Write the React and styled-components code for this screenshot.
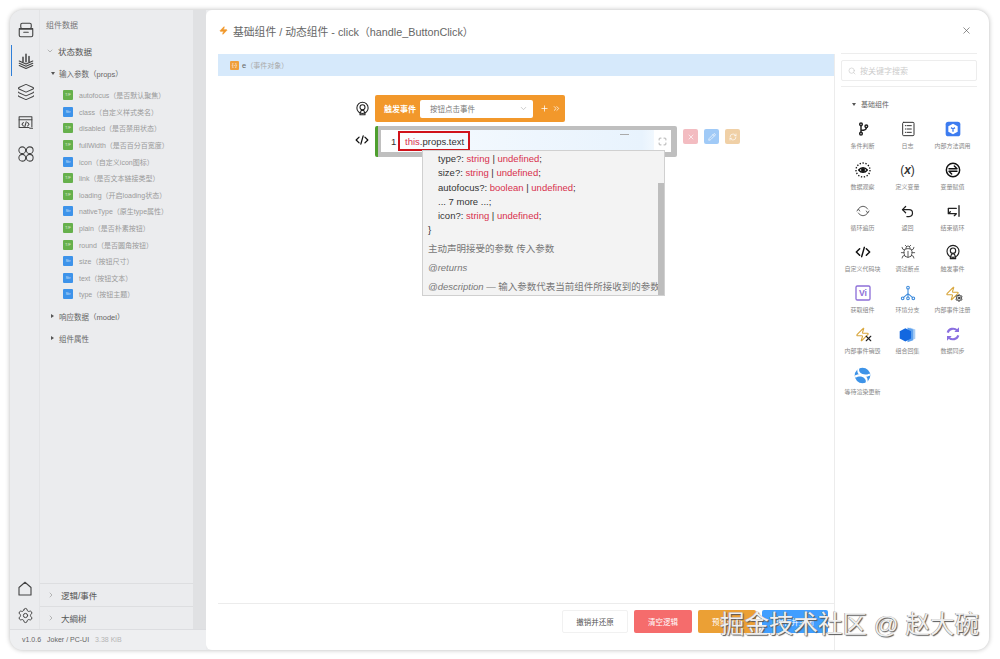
import React from "react";
import styled, { createGlobalStyle } from "styled-components";
import { Layers, Settings, X, Search, ChevronRight, ChevronDown, Plus, ChevronsRight, Bug, Undo2, RefreshCw, Zap, Pencil, Maximize } from "lucide-react";

const FONT = `"Liberation Sans", "Noto Sans CJK SC", sans-serif`;

const GlobalStyle = createGlobalStyle`
  html, body { margin: 0; padding: 0; background: #fff; }
  body { font-family: ${FONT}; width: 1000px; height: 659px; overflow: hidden; }
  * { box-sizing: border-box; }
`;

const params = [
  ["T/F", "autofocus", "（是否默认聚焦）"],
  ["Str", "class", "（自定义样式类名）"],
  ["T/F", "disabled", "（是否禁用状态）"],
  ["T/F", "fullWidth", "（是否百分百宽度）"],
  ["Str", "icon", "（自定义icon图标）"],
  ["T/F", "link", "（是否文本链接类型）"],
  ["T/F", "loading", "（开启loading状态）"],
  ["Str", "nativeType", "（原生type属性）"],
  ["T/F", "plain", "（是否朴素按钮）"],
  ["T/F", "round", "（是否圆角按钮）"],
  ["Str", "size", "（按钮尺寸）"],
  ["Str", "text", "（按钮文本）"],
  ["Str", "type", "（按钮主题）"],
];

const Svg = ({ children, size = 16, color = "#222", sw = 1.5 }) => (
  <svg width={size} height={size} viewBox="0 0 24 24" fill="none" stroke={color} strokeWidth={sw} strokeLinecap="round" strokeLinejoin="round">
    {children}
  </svg>
);

const TrayIcon = () => (
  <Svg size={18} color="#444">
    <rect x="5" y="3" width="14" height="7" rx="2" />
    <path d="M3 11h18v8a2 2 0 0 1-2 2H5a2 2 0 0 1-2-2z" />
    <path d="M3 10h18M9 15h6" />
  </Svg>
);

const DataIcon = () => (
  <Svg size={18} color="#444">
    <path d="M3 15l9 4 9-4M3 18l9 4 9-4M3 12l9 4 9-4" />
    <path d="M12 3v10M8 7v6M16 6v7" strokeWidth="2" />
  </Svg>
);

const CodeBoxIcon = () => (
  <Svg size={17} color="#444">
    <path d="M21 18V4H3v15h14" />
    <path d="M3 8h18M9 12l-2 2.5 2 2.5M15 12l2 2.5-2 2.5M13 11l-2 7M18 20h4" />
  </Svg>
);

const HomeIcon = () => (
  <Svg size={18} color="#444">
    <path d="M4 10l8-7 8 7v10H4z" />
  </Svg>
);

const LoopsIcon = () => (
  <Svg size={18} color="#444" sw={1.4}>
    <circle cx="7" cy="7" r="4.5" />
    <circle cx="17" cy="7" r="4.5" />
    <circle cx="7" cy="17" r="4.5" />
    <circle cx="17" cy="17" r="4.5" />
  </Svg>
);

const TriggerIcon = ({ size = 16 }) => (
  <Svg size={size} color="#222" sw={1.7}>
    <circle cx="12" cy="11" r="9" />
    <circle cx="12" cy="10" r="4" />
    <path d="M8 20l2-5h4l2 5v2H8z" />
  </Svg>
);

const CodeIcon = ({ size = 16 }) => (
  <Svg size={size} color="#111" sw={2.2}>
    <path d="M7 7l-5 5 5 5M17 7l5 5-5 5M14 5l-4 14" />
  </Svg>
);

const BranchIcon = () => (
  <Svg color="#222" sw={2.2}>
    <circle cx="9" cy="5" r="2" />
    <circle cx="9" cy="19" r="2" />
    <circle cx="17" cy="8" r="2" />
    <path d="M9 7v10M17 10c0 3-4 4-8 4" />
  </Svg>
);

const LogIcon = () => (
  <Svg color="#333">
    <rect x="4" y="2" width="17" height="20" rx="1.5" />
    <path d="M8 7h1M8 12h1M8 17h1M11 7h6M11 12h6M11 17h6" />
  </Svg>
);

const MethodIcon = () => (
  <svg width="16" height="16" viewBox="0 0 24 24">
    <rect x="1" y="1" width="22" height="22" rx="4" fill="#3d7cf0" />
    <path d="M12 4l7 4v8l-7 4-7-4V8z" fill="#fff" />
    <path d="M9 10l3 2 3-2M12 12v4" stroke="#3d7cf0" strokeWidth="2" fill="none" />
  </svg>
);

const WatchIcon = () => (
  <svg width="16" height="16" viewBox="0 0 24 24" fill="none" stroke="#111" strokeWidth="2">
    <circle cx="12" cy="12" r="10.5" strokeDasharray="2 2.4" />
    <path d="M5.5 12c3.500-4.500 9.500-4.500 13 0-3.500 4.500-9.500 4.500-13 0z" />
    <circle cx="12" cy="12" r="2" fill="#111" />
  </svg>
);

const AssignIcon = () => (
  <Svg color="#111" sw={2.2}>
    <circle cx="12" cy="12" r="10" />
    <path d="M6 10h12l-4-4M18 14H6l4 4" />
  </Svg>
);

const LoopIcon = () => (
  <Svg color="#555" sw={1.4}>
    <path d="M5 9a8 8 0 0 1 14 0M19 15a8 8 0 0 1-14 0" />
    <path d="M3 12l2-3 2 3M21 12l-2 3-2-3" />
  </Svg>
);

const BreakIcon = () => (
  <Svg color="#222" sw={2}>
    <path d="M21 4v16M17 8H5v8h12M5 16l3-3M17 16l-3 3" />
  </Svg>
);

const ViIcon = () => (
  <svg width="16" height="16" viewBox="0 0 24 24">
    <rect x="1.5" y="1.5" width="21" height="21" rx="2" fill="none" stroke="#8d6fd8" strokeWidth="2" />
    <text x="12" y="17" textAnchor="middle" fontSize="13" fontWeight="700" fill="#8d6fd8" fontFamily="Liberation Sans">Vi</text>
  </svg>
);

const TreeIcon = () => (
  <Svg color="#3d8bdc" sw={1.6}>
    <circle cx="12" cy="4" r="2" />
    <circle cx="4" cy="20" r="2" />
    <circle cx="12" cy="20" r="2" />
    <circle cx="20" cy="20" r="2" />
    <path d="M12 6v12M12 13l-7 6M12 13l7 6" />
  </Svg>
);

const ZapBadge = styled.span`
  position: relative;
  display: inline-flex;
  color: #d8a53a;
  & > b {
    position: absolute;
    right: -3px;
    bottom: -1px;
    display: flex;
    color: #222;
  }
`;

const ZapSetIcon = () => (
  <ZapBadge>
    <Zap size={15} strokeWidth={1.8} />
    <b><Settings size={8} strokeWidth={3} /></b>
  </ZapBadge>
);

const ZapCloseIcon = () => (
  <ZapBadge>
    <Zap size={15} strokeWidth={1.8} />
    <b><X size={9} strokeWidth={3} /></b>
  </ZapBadge>
);

const ComboIcon = () => (
  <svg width="17" height="17" viewBox="0 0 24 24">
    <path d="M15 2l8 3v13l-8 3z" fill="#a9cdf5" />
    <path d="M12 2l8 3v15l-8 3z" fill="#5fa2ee" />
    <path d="M9 3l8 4.500v10L9 22l-8-4.500v-10z" fill="#1368e0" />
  </svg>
);

const SyncIcon = () => (
  <svg width="16" height="16" viewBox="0 0 24 24" fill="none" stroke="#8a6fe0" strokeWidth="3.2">
    <path d="M4 10a8.500 8.500 0 0 1 14-3.500" />
    <path d="M20 14a8.500 8.500 0 0 1-14 3.500" />
    <path d="M21 2v7h-7M3 22v-7h7" fill="#8a6fe0" stroke="none" />
  </svg>
);

const WaitIcon = () => (
  <svg width="17" height="17" viewBox="0 0 24 24">
    <circle cx="12" cy="12" r="11" fill="#3d93e8" />
    <path d="M8 1c-2 4 0 7 4 9 3 1 6 1 10-1l1 3c-6 3-11 2-14 0C5 10 4 6 5 2z" fill="#fff" />
    <path d="M16 23c2-4 0-7-4-9-3-1-6-1-10 1l-1-3c6-3 11-2 14 0 4 2 5 6 4 10z" fill="#fff" />
  </svg>
);

const VarText = styled.span`
  font-size: 12px;
  color: #333;
  line-height: 16px;
  & > i {
    font-weight: 700;
  }
`;

const palette = [
  [<BranchIcon />, "条件判断"],
  [<LogIcon />, "日志"],
  [<MethodIcon />, "内部方法调用"],
  [<WatchIcon />, "数据观察"],
  [<VarText>(<i>x</i>)</VarText>, "定义变量"],
  [<AssignIcon />, "变量赋值"],
  [<LoopIcon />, "循环遍历"],
  [<Undo2 size={15} color="#222" strokeWidth={2} />, "返回"],
  [<BreakIcon />, "结束循环"],
  [<CodeIcon />, "自定义代码块"],
  [<Bug size={16} color="#444" strokeWidth={1.3} />, "调试断点"],
  [<TriggerIcon />, "触发事件"],
  [<ViIcon />, "获取组件"],
  [<TreeIcon />, "环境分支"],
  [<ZapSetIcon />, "内部事件注册"],
  [<ZapCloseIcon />, "内部事件销毁"],
  [<ComboIcon />, "组合回集"],
  [<SyncIcon />, "数据同步"],
  [<WaitIcon />, "等待渲染更新"],
];

export default function App() {
  return (
    <>
      <GlobalStyle />
      <Page>
        <Win>
          <LeftCol>
            <LeftMain>
              <Rail>
                <RailItem><TrayIcon /></RailItem>
                <RailItem $active><DataIcon /></RailItem>
                <RailItem><Layers size={18} color="#444" strokeWidth={1.4} /></RailItem>
                <RailItem><CodeBoxIcon /></RailItem>
                <RailItem><LoopsIcon /></RailItem>
                <RailBottom>
                  <RailSmall><HomeIcon /></RailSmall>
                  <RailSmall><Settings size={17} color="#444" strokeWidth={1.4} /></RailSmall>
                </RailBottom>
              </Rail>
              <Panel>
                <PanelTitle>组件数据</PanelTitle>
                <GroupHead><ChevronDown size={8} color="#999" />状态数据</GroupHead>
                <SubHead><Caret />输入参数（props）</SubHead>
                <ParamList>
                  {params.map(([type, name, note]) => (
                    <ParamRow key={name}>
                      <TypeTag $str={type === "Str"}>{type}</TypeTag>
                      {name}{note}
                    </ParamRow>
                  ))}
                </ParamList>
                <SubHead $gap="7px"><Caret $right />响应数据（model）</SubHead>
                <SubHead $gap="9px"><Caret $right />组件属性</SubHead>
                <Accordions>
                  <AccordionRow><ChevronRight size={8} color="#999" />逻辑/事件</AccordionRow>
                  <AccordionRow><ChevronRight size={8} color="#999" />大綱树</AccordionRow>
                </Accordions>
              </Panel>
              <PanelShade />
            </LeftMain>
            <StatusBar>
              <span>v1.0.6</span>
              <span>Joker / PC-UI</span>
              <Muted>3.38 KiB</Muted>
            </StatusBar>
          </LeftCol>
          <Modal>
            <ModalHead>
              <Zap size={9} color="#f0982b" fill="#f0982b" />
              <ModalTitle>基础组件 / 动态组件 - click（handle_ButtonClick）</ModalTitle>
              <CloseBtn><X size={11} strokeWidth={1.4} /></CloseBtn>
            </ModalHead>
            <ModalBody>
              <Workspace>
                <ParamBar>
                  <ParamBadge>{"{-}"}</ParamBadge>
                  <span>e</span>
                  <ParamNote>（事件对象）</ParamNote>
                </ParamBar>
                <Canvas>
                  <BlockRow>
                    <BlockIcon><TriggerIcon size={15} /></BlockIcon>
                    <EventBlock>
                      <EventLabel>触发事件</EventLabel>
                      <EventSelect>
                        按钮点击事件
                        <ChevronDown size={9} color="#bbb" />
                      </EventSelect>
                      <Plus size={9} color="#fff" />
                      <ChevronsRight size={9} color="#fff" />
                    </EventBlock>
                  </BlockRow>
                  <BlockRow>
                    <BlockIcon><CodeIcon size={14} /></BlockIcon>
                    <EditorBlock>
                      <EditorInner>
                        <LineNo>1</LineNo>
                        <CodeBox><Kw>this</Kw>.props.text</CodeBox>
                        <MiniDash />
                        <ExpandBtn><Maximize size={9} color="#999" /></ExpandBtn>
                      </EditorInner>
                      <Hover>
                        <HoverLine $indent>type?: <Kw>string</Kw> | <Kw>undefined</Kw>;</HoverLine>
                        <HoverLine $indent>size?: <Kw>string</Kw> | <Kw>undefined</Kw>;</HoverLine>
                        <HoverLine $indent>autofocus?: <Kw>boolean</Kw> | <Kw>undefined</Kw>;</HoverLine>
                        <HoverLine $indent>... 7 more ...;</HoverLine>
                        <HoverLine $indent>icon?: <Kw>string</Kw> | <Kw>undefined</Kw>;</HoverLine>
                        <HoverLine>{"}"}</HoverLine>
                        <HoverDoc>主动声明接受的参数 传入参数</HoverDoc>
                        <HoverDoc><em>@returns</em></HoverDoc>
                        <HoverDoc><em>@description</em> — 输入参数代表当前组件所接收到的参数</HoverDoc>
                        <ScrollThumb />
                      </Hover>
                    </EditorBlock>
                    <Actions>
                      <ActionBtn $bg="#f3bcc1"><X size={8} color="#fff" /></ActionBtn>
                      <ActionBtn $bg="#a0caf7"><Pencil size={8} color="#fff" /></ActionBtn>
                      <ActionBtn $bg="#f0d0a6"><RefreshCw size={8} color="#fff" /></ActionBtn>
                    </Actions>
                  </BlockRow>
                </Canvas>
                <FootBar>
                  <FootBtn $bg="#fff" $color="#555" $w="66px" $line>撤销并还原</FootBtn>
                  <FootBtn $bg="#f56c6c" $w="58px">清空逻辑</FootBtn>
                  <FootBtn $bg="#eba035" $w="58px">预览调试</FootBtn>
                  <FootBtn $bg="#409eff" $w="66px">保存并关闭</FootBtn>
                </FootBar>
              </Workspace>
              <Palette>
                <SearchBox><Search size={8} color="#ccc" />按关键字搜索</SearchBox>
                <PaletteHead><Caret />基础组件</PaletteHead>
                <PaletteGrid>
                  {palette.map(([icon, label]) => (
                    <PaletteItem key={label}>
                      <PaletteIcon>{icon}</PaletteIcon>
                      <PaletteLabel>{label}</PaletteLabel>
                    </PaletteItem>
                  ))}
                </PaletteGrid>
              </Palette>
            </ModalBody>
          </Modal>
        </Win>
        <Watermark>掘金技术社区 @ 赵大碗</Watermark>
      </Page>
    </>
  );
}

const Page = styled.div`
  position: relative;
  width: 1000px;
  height: 659px;
  padding: 10px 11px 9px 10px;
`;

const Win = styled.div`
  display: flex;
  height: 640px;
  border-radius: 13px;
  overflow: hidden;
  background: #ebecee;
  box-shadow: 0 0 5px rgba(0, 0, 0, 0.28);
`;

const LeftCol = styled.div`
  width: 196px;
  flex: none;
  display: flex;
  flex-direction: column;
`;

const LeftMain = styled.div`
  flex: 1;
  display: flex;
  min-height: 0;
`;

const Rail = styled.div`
  width: 30px;
  flex: none;
  display: flex;
  flex-direction: column;
  padding: 4px 0 0 1px;
  background: #ebecee;
  border-right: 1px solid #e3e4e6;
`;

const RailItem = styled.div`
  height: 31px;
  display: flex;
  align-items: center;
  justify-content: center;
  border-left: 1.5px solid ${(p) => (p.$active ? "#2f7fd8" : "transparent")};
`;

const RailBottom = styled.div`
  margin-top: auto;
  padding-bottom: 1px;
`;

const RailSmall = styled.div`
  height: 26px;
  display: flex;
  align-items: center;
  justify-content: center;
`;

const Panel = styled.div`
  width: 153px;
  flex: none;
  display: flex;
  flex-direction: column;
  padding-left: 6px;
`;

const PanelShade = styled.div`
  flex: 1;
  background: #e0e1e3;
`;

const PanelTitle = styled.div`
  height: 31px;
  padding-top: 10px;
  font-size: 8px;
  line-height: 11px;
  color: #777;
`;

const GroupHead = styled.div`
  height: 20px;
  display: flex;
  align-items: center;
  gap: 4px;
  font-size: 8.5px;
  color: #555;
`;

const SubHead = styled.div`
  display: flex;
  align-items: center;
  height: 13px;
  margin: ${(p) => p.$gap || "6px"} 0 0 5px;
  font-size: 7.5px;
  color: #666;
  gap: 4px;
`;

const Caret = styled.i`
  width: 0;
  height: 0;
  flex: none;
  ${(p) =>
    p.$right
      ? "border-left: 3px solid #555; border-top: 2.5px solid transparent; border-bottom: 2.5px solid transparent; margin-right: 1px;"
      : "border-top: 3px solid #555; border-left: 2.5px solid transparent; border-right: 2.5px solid transparent;"}
`;

const ParamList = styled.div`
  margin-top: 7px;
  padding-left: 17px;
`;

const ParamRow = styled.div`
  height: 16.6px;
  display: flex;
  align-items: center;
  font-size: 7px;
  color: #9a9a9a;
  white-space: nowrap;
`;

const TypeTag = styled.span`
  width: 10px;
  height: 10px;
  margin-right: 6px;
  flex: none;
  background: ${(p) => (p.$str ? "#3d93ea" : "#66b04c")};
  color: rgba(255, 255, 255, 0.75);
  font-size: 4px;
  line-height: 10px;
  text-align: center;
  border-radius: 1px;
`;

const Accordions = styled.div`
  margin-top: auto;
`;

const AccordionRow = styled.div`
  height: 23px;
  display: flex;
  align-items: center;
  gap: 6px;
  margin-left: -6px;
  padding-left: 7px;
  border-top: 1px solid #dddee0;
  font-size: 8.5px;
  color: #555;
`;

const StatusBar = styled.div`
  height: 21px;
  flex: none;
  display: flex;
  align-items: center;
  gap: 6px;
  padding: 0 0 2px 12px;
  border-top: 1px solid #dcdde0;
  background: #eeeff1;
  font-size: 7px;
  color: #666;
`;

const Muted = styled.span`
  color: #b5b5b5;
`;

const Modal = styled.div`
  flex: 1;
  min-width: 0;
  display: flex;
  flex-direction: column;
  background: #fff;
  border-radius: 6px 0 0 6px;
`;

const ModalHead = styled.div`
  height: 44px;
  flex: none;
  display: flex;
  align-items: center;
  padding: 0 17px 3px 13px;
`;

const ModalTitle = styled.div`
  margin-left: 5px;
  font-size: 10.8px;
  color: #666;
`;

const CloseBtn = styled.div`
  margin-left: auto;
  display: flex;
  color: #555;
`;

const ModalBody = styled.div`
  flex: 1;
  min-height: 0;
  display: flex;
  padding-left: 12px;
`;

const Workspace = styled.div`
  width: 617px;
  flex: none;
  display: flex;
  flex-direction: column;
  border-right: 1px solid #ececec;
`;

const ParamBar = styled.div`
  height: 22px;
  flex: none;
  display: flex;
  align-items: center;
  padding-left: 12px;
  background: #d6e9fb;
  font-size: 7.5px;
  color: #666;
`;

const ParamBadge = styled.span`
  width: 9px;
  height: 9px;
  margin-right: 3px;
  background: #ef9f3c;
  border-radius: 1px;
  color: #fff;
  font-size: 5px;
  line-height: 9px;
  text-align: center;
`;

const ParamNote = styled.span`
  color: #aaa;
  font-size: 7px;
`;

const Canvas = styled.div`
  flex: 1;
  display: flex;
  flex-direction: column;
  gap: 4px;
  padding: 19px 0 0 137px;
`;

const BlockRow = styled.div`
  display: flex;
  align-items: flex-start;
`;

const BlockIcon = styled.div`
  width: 20px;
  height: 27px;
  display: flex;
  align-items: center;
  flex: none;
`;

const EventBlock = styled.div`
  width: 190px;
  height: 27px;
  display: flex;
  align-items: center;
  gap: 3px;
  padding-left: 9px;
  background: #f2982b;
  border-radius: 2px;
`;

const EventLabel = styled.span`
  font-size: 8px;
  font-weight: 700;
  color: #fff;
  width: 33px;
  flex: none;
`;

const EventSelect = styled.div`
  width: 113px;
  height: 18px;
  margin-right: 4px;
  display: flex;
  align-items: center;
  justify-content: space-between;
  padding: 0 5px 0 10px;
  background: #fff;
  border-radius: 2px;
  font-size: 7.5px;
  color: #777;
`;

const EditorBlock = styled.div`
  position: relative;
  width: 302px;
  height: 31px;
  padding: 4px 6px 5px 3px;
  background: #bfbfbf;
  border-left: 3px solid #4e9f2e;
  border-radius: 2px;
`;

const EditorInner = styled.div`
  height: 22px;
  display: flex;
  align-items: center;
  background: linear-gradient(90deg, #fff 0%, #f2f8fe 30%, #e8f3fd 90%, #fff 100%);
  font-size: 9.5px;
  color: #333;
`;

const LineNo = styled.span`
  flex: none;
  width: 17px;
  padding-left: 10px;
`;

const CodeBox = styled.div`
  height: 20px;
  padding: 0 4px 0 5px;
  display: flex;
  align-items: center;
  border: 2px solid #d0121b;
`;

const Kw = styled.span`
  color: #d8304c;
`;

const MiniDash = styled.i`
  width: 9px;
  height: 1px;
  margin: 0 25px 14px auto;
  background: #aaa;
`;

const ExpandBtn = styled.div`
  width: 17px;
  height: 22px;
  display: flex;
  align-items: center;
  justify-content: center;
  background: #fff;
`;

const Hover = styled.div`
  position: absolute;
  left: 44px;
  top: 24px;
  width: 243px;
  height: 146px;
  padding: 1px 6px 0 5px;
  background: #f3f3f3;
  border: 1px solid #d0d0d0;
  font-size: 9.5px;
  color: #333;
  overflow: hidden;
`;

const HoverLine = styled.div`
  height: 14.3px;
  line-height: 14.3px;
  padding-left: ${(p) => (p.$indent ? "10px" : "0")};
  white-space: nowrap;
`;

const HoverDoc = styled.div`
  height: 19px;
  line-height: 19px;
  font-size: 9.5px;
  color: #777;
  white-space: nowrap;
  position: relative;
  top: 1px;
`;

const ScrollThumb = styled.div`
  position: absolute;
  right: 0;
  top: 32px;
  bottom: 0;
  width: 6px;
  background: #bdbdbd;
`;

const Actions = styled.div`
  display: flex;
  gap: 6px;
  margin: 3px 0 0 6px;
`;

const ActionBtn = styled.div`
  width: 15px;
  height: 15px;
  display: flex;
  align-items: center;
  justify-content: center;
  background: ${(p) => p.$bg};
  border-radius: 2px;
`;

const FootBar = styled.div`
  height: 47px;
  flex: none;
  display: flex;
  justify-content: flex-end;
  gap: 6px;
  padding: 6px 6px 0 0;
  border-top: 1px solid #ececec;
`;

const FootBtn = styled.div`
  width: ${(p) => p.$w};
  height: 23px;
  display: flex;
  align-items: center;
  justify-content: center;
  background: ${(p) => p.$bg};
  color: ${(p) => p.$color || "#fff"};
  border: ${(p) => (p.$line ? "1px solid #f1f1f1" : "0")};
  border-radius: 2px;
  font-size: 7.5px;
`;

const Palette = styled.div`
  flex: 1;
  margin: -1px 12px 0 6px;
  padding-top: 6px;
  min-width: 0;
  border-top: 1px solid #ededed;
`;

const SearchBox = styled.div`
  height: 21px;
  display: flex;
  align-items: center;
  gap: 4px;
  padding-left: 6px;
  border: 1px solid #ededed;
  border-radius: 2px;
  font-size: 8px;
  color: #ccc;
`;

const PaletteHead = styled.div`
  display: flex;
  align-items: center;
  gap: 5px;
  margin-top: 5px;
  padding: 6px 0 0 11px;
  height: 29px;
  border-top: 1px solid #ededed;
  font-size: 7px;
  color: #666;
`;

const PaletteGrid = styled.div`
  display: grid;
  grid-template-columns: repeat(3, 45px);
  grid-auto-rows: 41px;
  margin: 5px 0 0 -1px;
`;

const PaletteItem = styled.div`
  display: flex;
  flex-direction: column;
  align-items: center;
  gap: 3px;
`;

const PaletteIcon = styled.div`
  height: 18px;
  display: flex;
  align-items: center;
  justify-content: center;
`;

const PaletteLabel = styled.div`
  font-size: 6px;
  line-height: 10px;
  color: #888;
  white-space: nowrap;
`;

const Watermark = styled.div`
  position: absolute;
  left: 720px;
  top: 610px;
  font-size: 24.5px;
  line-height: 30px;
  color: #efefef;
  white-space: nowrap;
  text-shadow: 1px 1px 1px #555, -0.5px -0.5px 0.5px #888;
`;
